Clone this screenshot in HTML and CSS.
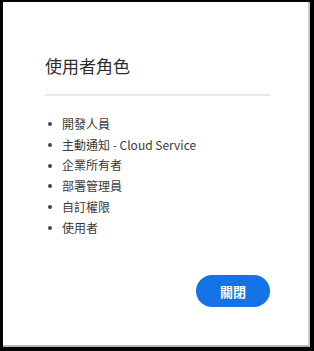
FILE: index.html
```html
<!DOCTYPE html>
<html lang="zh-Hant">
<head>
  <meta charset="UTF-8">
  <meta name="viewport" content="width=device-width, initial-scale=1.0">
  <title>使用者角色</title>
  <link rel="stylesheet" href="styles.css">
</head>
<body>
  <div class="dialog">
    <h2 class="dialog-title">使用者角色</h2>
    <hr class="divider">
    <ul class="role-list">
      <li>開發人員</li>
      <li>主動通知 - Cloud Service</li>
      <li>企業所有者</li>
      <li>部署管理員</li>
      <li>自訂權限</li>
      <li>使用者</li>
    </ul>
    <div class="button-container">
      <button type="button" class="close-btn">關閉</button>
    </div>
  </div>
</body>
</html>
```

FILE: styles.css
```css
* {
  box-sizing: border-box;
  margin: 0;
  padding: 0;
}

html, body {
  height: 100%;
}

body {
  font-family: "Noto Sans CJK TC", "Noto Sans", sans-serif;
  background: #000;
  padding: 2px 4px 4px 3px;
}

.dialog {
  height: 345px;
  background: #fff;
  border-right: 2px solid #c8c8c8;
  border-bottom: 2px solid #b4b4b4;
  padding: 53px 38px 0 42px;
  display: flex;
  flex-direction: column;
}

.dialog-title {
  font-size: 17px;
  line-height: 22px;
  font-weight: 400;
  color: #2c2c2c;
}

.divider {
  border: none;
  height: 2px;
  background: #e8e8e8;
  margin-top: 17px;
}

.role-list {
  list-style: none;
  margin-top: 18px;
  padding-left: 3px;
}

.role-list li {
  display: flex;
  align-items: center;
  font-size: 12px;
  line-height: 20.7px;
  color: #3a3a3a;
}

.role-list li::before {
  content: "";
  width: 4px;
  height: 4px;
  border-radius: 50%;
  background: #444;
  margin-right: 10px;
  flex-shrink: 0;
}

.button-container {
  display: flex;
  justify-content: flex-end;
  margin-top: 37px;
}

.close-btn {
  width: 74px;
  height: 32px;
  border: none;
  border-radius: 16px;
  background: #1473e6;
  color: #fff;
  font-family: inherit;
  font-size: 13px;
  font-weight: 700;
  cursor: pointer;
}
```
